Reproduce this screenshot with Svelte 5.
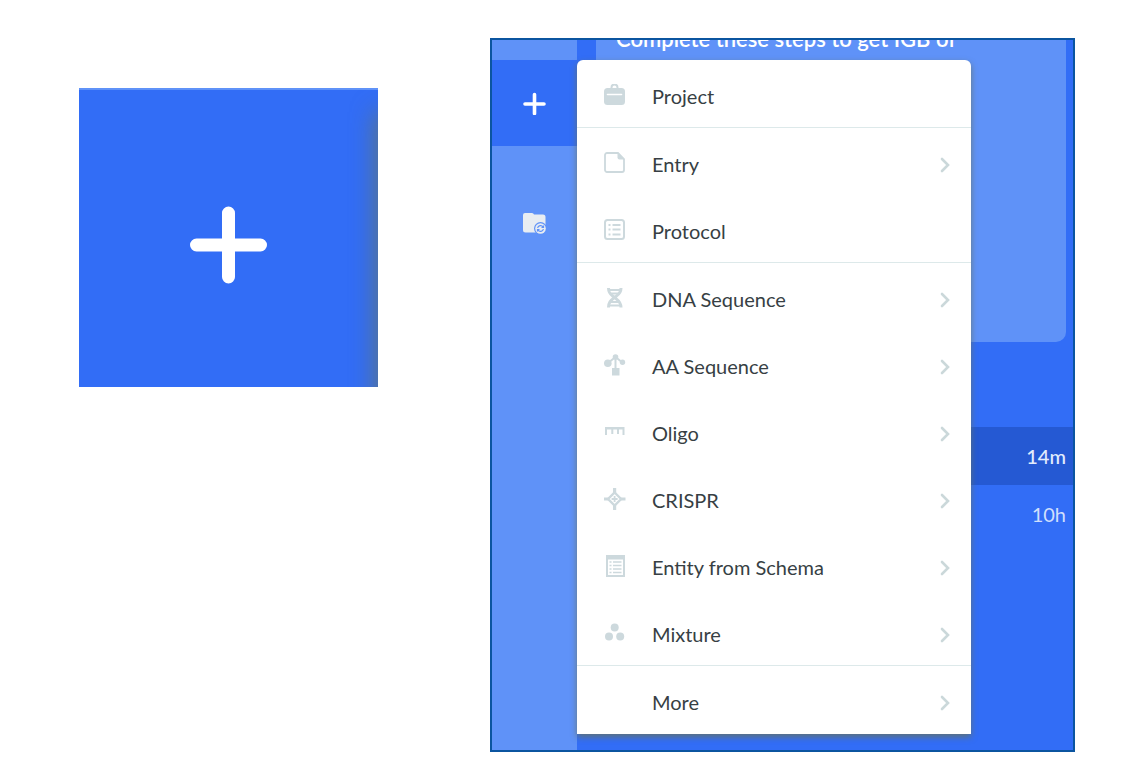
<script>
  const groups = [
    [{ label: 'Project', icon: 'project', more: false }],
    [
      { label: 'Entry', icon: 'entry', more: true },
      { label: 'Protocol', icon: 'protocol', more: false }
    ],
    [
      { label: 'DNA Sequence', icon: 'dna', more: true },
      { label: 'AA Sequence', icon: 'aa', more: true },
      { label: 'Oligo', icon: 'oligo', more: true },
      { label: 'CRISPR', icon: 'crispr', more: true },
      { label: 'Entity from Schema', icon: 'schema', more: true },
      { label: 'Mixture', icon: 'mixture', more: true }
    ],
    [{ label: 'More', icon: '', more: true }]
  ];
  const recent = ['14m', '10h'];
</script>

{#snippet icon(name)}
  <svg class="icon" viewBox="0 0 22 22" aria-hidden="true">
    {#if name === 'project'}
      <path class="line" d="M7.500 5V3.500a3 3 0 0 1 6 0V5" stroke-width="2" />
      <rect x="0" y="4" width="21" height="17" rx="3.500" />
      <path d="M3.500 10.500h14" stroke="#fff" stroke-width="1.600" stroke-linecap="round" />
    {:else if name === 'entry'}
      <path class="line" d="M3 1h11l6 6v11a2 2 0 0 1-2 2H3a2 2 0 0 1-2-2V3a2 2 0 0 1 2-2z" stroke-width="1.800" />
      <path d="M13.500 1v4.500a2 2 0 0 0 2 2H20.500z" />
    {:else if name === 'protocol'}
      <rect class="line" x="1" y="1" width="19" height="19" rx="2.500" stroke-width="2" />
      <path class="line" d="M4.500 6h2M8.500 6h8M4.500 10.500h2M8.500 10.500h8M4.500 15.500h2M8.500 15.500h8" stroke-width="2" />
    {:else if name === 'dna'}
      <path class="line" d="M4.500 1c0 6 3 7 6 9.500s6.500 4 6.500 10M17 1c0 6-3.500 7-6.500 9.500s-6 4-6 10" stroke-width="3" />
      <path class="line" d="M4 3h14M6 6.500h10M6 15h10M4 18.500h14" stroke-width="2" />
    {:else if name === 'aa'}
      <path class="line" d="M4 9l7.500-6 7.500 6M11.500 3v12" stroke-width="2" />
      <circle cx="3.800" cy="9.300" r="3.800" />
      <circle cx="11.500" cy="3" r="2.800" />
      <circle cx="18.500" cy="8.300" r="2.700" />
      <rect x="8" y="14" width="7.500" height="7.500" />
    {:else if name === 'oligo'}
      <path d="M1 6h19.500v8h-2V8.500h-3.500V13h-2V8.500H9.300V13h-2V8.500H3V14H1z" />
    {:else if name === 'crispr'}
      <path d="M9 0h3.200v5H9zM9 17h3.200v5H9zM0 9.400h5v3.200H0zM16.500 9.400h5v3.200h-5z" />
      <path class="line" d="M10.600 4.500l6.500 6.500-6.500 6.500L4.100 11z" stroke-width="2.400" />
      <path class="line" d="M10.600 8v6M7.600 11h6" stroke-width="1.800" />
    {:else if name === 'schema'}
      <path d="M2 0h19v22H2zM4 4.500v15.500h15V4.500z" fill-rule="evenodd" />
      <path class="line" d="M5.500 7h2M9 7h8.500M5.500 10.500h2M9 10.500h8.500M5.500 14h2M9 14h8.500M5.500 17.500h2M9 17.500h8.500" stroke-width="1.600" />
    {:else if name === 'mixture'}
      <circle cx="10.700" cy="5.500" r="4" />
      <circle cx="5" cy="14.500" r="4" />
      <circle cx="16.200" cy="14.500" r="4" />
    {/if}
  </svg>
{/snippet}

<main>
  <button class="tile" aria-label="Create">
    <svg viewBox="0 0 78 78" aria-hidden="true"><path d="M38.500 7v64M6.500 39h64" stroke="#fff" stroke-width="13" stroke-linecap="round" /></svg>
  </button>

  <section class="panel">
    <nav class="rail">
      <button class="create" aria-label="Create">
        <svg viewBox="0 0 24 24" aria-hidden="true"><path d="M11.500 3.500v19M2 13h19" stroke="#fff" stroke-width="3.600" stroke-linecap="round" /></svg>
      </button>
      <button class="projects" aria-label="Projects">
        <svg viewBox="0 0 24 24" aria-hidden="true">
          <path d="M0 4a2 2 0 0 1 2-2h7q1.500 0 2 1.500H20a2.500 2.500 0 0 1 2.500 2.500v13a2.500 2.500 0 0 1-2.500 2.500H2.500A2.500 2.500 0 0 1 0 19z" fill="#e8edf2" />
          <circle cx="17.500" cy="17.500" r="6.500" fill="#5f92f8" />
          <circle cx="17.500" cy="17.500" r="5.300" fill="#e8edf2" />
          <path d="M14.600 17a3 3 0 0 1 5.500-1M20.400 18a3 3 0 0 1-5.500 1M20.500 14.500v2h-2M14.500 20.500v-2h2" fill="none" stroke="#5f92f8" stroke-width="1.200" />
        </svg>
      </button>
    </nav>

    <div class="feed">
      <div class="banner"><p>Complete these steps to get IGB of</p></div>
      <ul class="recent">
        {#each recent as time, i}
          <li class:active={i === 0}>{time}</li>
        {/each}
      </ul>
    </div>

    <div class="menu">
      {#each groups as items}
        <div class="group">
          {#each items as item}
            <button class="item">
              {@render icon(item.icon)}
              <span>{item.label}</span>
              {#if item.more}
                <svg class="chevron" viewBox="0 0 10 16" aria-hidden="true"><path d="M2 2l6 6-6 6" /></svg>
              {/if}
            </button>
          {/each}
        </div>
      {/each}
    </div>
  </section>
</main>

<style>
  :global(body) {
    margin: 0;
    background: #fff;
  }
  main {
    display: grid;
    grid-template-columns: 299fr 585fr;
    align-items: start;
    gap: 112px;
    padding: 38px 58px 16px 79px;
    font-family: Lato, "Open Sans", sans-serif;
  }
  button {
    margin: 0;
    padding: 0;
    border: 0;
    background: none;
    font: inherit;
    color: inherit;
    cursor: pointer;
  }
  svg {
    display: block;
    flex: none;
  }
  .tile {
    position: relative;
    display: grid;
    place-items: center;
    box-sizing: border-box;
    width: 100%;
    aspect-ratio: 1;
    margin-top: 50px;
    padding-top: 12px;
    overflow: hidden;
    border-top: 2px solid #5f92f8;
    background: #326df6;
  }
  .tile::after {
    content: "";
    position: absolute;
    top: 24px;
    bottom: -40px;
    left: 100%;
    width: 40px;
    box-shadow: 0 0 24px 2px rgba(100, 118, 110, 0.9);
  }
  .tile svg {
    width: 78px;
  }
  .panel {
    display: grid;
    grid-template-columns: 85px 1fr;
    overflow: hidden;
    border: 2px solid #0b55a0;
    background: #326df6;
  }
  .rail {
    grid-area: 1 / 1;
    padding-top: 20px;
    background: #5f92f8;
  }
  .rail button {
    display: grid;
    place-items: center;
    width: 100%;
    height: 86px;
  }
  .rail svg {
    width: 24px;
  }
  .create {
    background: #326df6;
  }
  .rail .projects {
    margin-top: 34px;
  }
  .feed {
    grid-area: 1 / 2;
    padding-left: 19px;
  }
  .banner {
    height: 302px;
    margin-right: 7px;
    overflow: hidden;
    border-bottom-right-radius: 10px;
    background: #5f92f8;
  }
  .banner p {
    margin: -15px 0 0 20px;
    font-size: 22px;
    line-height: 28px;
    font-weight: 600;
    white-space: nowrap;
    color: #fff;
  }
  .recent {
    margin: 85px 0 0 -19px;
    padding: 0;
    list-style: none;
    font-size: 20px;
    line-height: 58px;
    text-align: right;
    color: #cfdffc;
  }
  .recent li {
    padding-right: 7px;
  }
  .recent .active {
    background: #2559d3;
    font-weight: 500;
    color: #e2ecfd;
  }
  .menu {
    grid-area: 1 / 1 / 2 / 3;
    z-index: 1;
    margin: 20px 102px 16px 85px;
    padding-bottom: 1px;
    border-radius: 6px 6px 0 0;
    background: #fff;
    box-shadow: 0 3px 6px rgba(105, 115, 85, 0.8);
  }
  .group + .group {
    border-top: 1px solid #dde9ea;
  }
  .item {
    display: flex;
    align-items: center;
    gap: 26px;
    box-sizing: border-box;
    width: 100%;
    height: 67px;
    padding: 4px 21px 0 27px;
    font-size: 20px;
    line-height: 24px;
    text-align: left;
    color: #373f44;
  }
  .item span {
    flex: 1;
  }
  .icon {
    width: 22px;
    margin-bottom: 2px;
    fill: #cdd9dd;
  }
  .line {
    fill: none;
    stroke: #cdd9dd;
  }
  .chevron {
    width: 10px;
    margin-top: 2px;
    fill: none;
    stroke: #cbd8da;
    stroke-width: 2.600;
    stroke-linecap: round;
  }
</style>
